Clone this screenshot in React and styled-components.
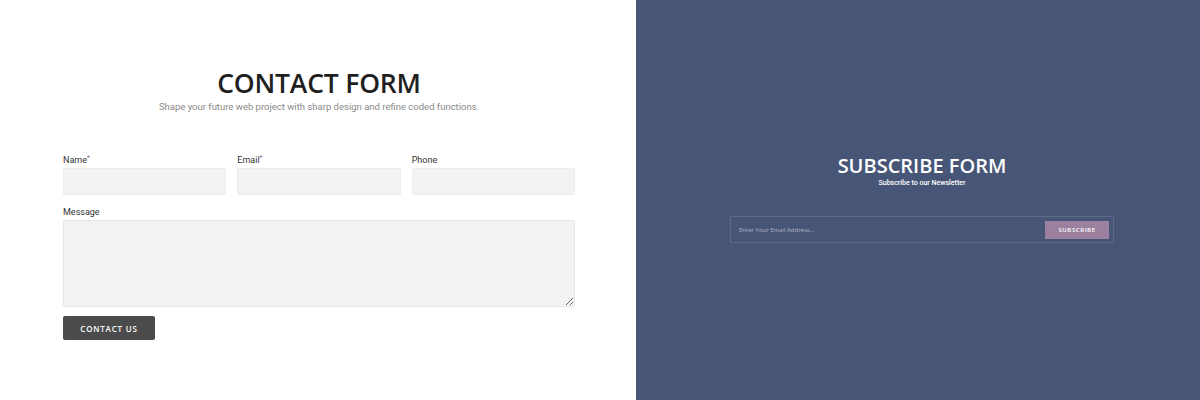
import React from "react";
import styled, { createGlobalStyle } from "styled-components";

const Global = createGlobalStyle`
  html, body { margin: 0; padding: 0; }
  body { font-family: "Open Sans", "Liberation Sans", sans-serif; }
  * { box-sizing: border-box; }
`;

const Page = styled.div`
  display: flex;
  width: 1200px;
  height: 400px;
  overflow: hidden;
`;

const LeftPanel = styled.section`
  width: 636px;
  background: #ffffff;
  padding: 69px 61px 0 63px;
`;

const RightPanel = styled.section`
  flex: 1;
  background: #475677;
  display: flex;
  flex-direction: column;
  align-items: center;
  padding-top: 155px;
  padding-left: 8px;
`;

const Header = styled.header`
  text-align: center;
  margin-bottom: 42px;
`;

const Title = styled.h1`
  margin: 0;
  font-family: "Open Sans", sans-serif;
  font-weight: 600;
  font-size: ${(p) => p.$size}px;
  line-height: 1.1;
  color: ${(p) => p.$color};
  letter-spacing: ${(p) => p.$spacing || 0}px;
`;

const Subtitle = styled.p`
  margin: 3px 0 0;
  font-family: Roboto, "Liberation Sans", sans-serif;
  font-size: 9.5px;
  line-height: 12px;
  color: #8a8a8a;
`;

const Form = styled.form`
  display: flex;
  flex-direction: column;
  width: 512px;
`;

const Row = styled.div`
  display: grid;
  grid-template-columns: repeat(3, 1fr);
  column-gap: 11px;
  margin-bottom: 12px;
`;

const Field = styled.div`
  display: flex;
  flex-direction: column;
`;

const Label = styled.label`
  font-family: Roboto, "Liberation Sans", sans-serif;
  font-size: 9px;
  line-height: 11px;
  color: #333;
  margin-bottom: 2px;
`;

const Req = styled.sup`
  color: #8a6b8c;
  font-size: 7px;
  vertical-align: top;
  position: relative;
  top: -2px;
`;

const Input = styled.input`
  height: 27px;
  width: 100%;
  border: 1px solid #ececec;
  border-radius: 2px;
  background: #f3f3f3;
  outline: none;
`;

const TextArea = styled.textarea`
  height: 87px;
  width: 100%;
  border: 1px solid #e6e6e6;
  border-radius: 2px;
  background: #f3f3f3;
  outline: none;
  resize: vertical;
  display: block;
`;

const Button = styled.button`
  margin-top: 9px;
  width: 92px;
  height: 24px;
  border: none;
  border-radius: 2px;
  background: #4b4b4b;
  color: #ffffff;
  font-family: "Open Sans", sans-serif;
  font-weight: 600;
  font-size: 8px;
  letter-spacing: 0.8px;
  text-transform: uppercase;
  padding: 0;
`;

const SubText = styled.p`
  margin: 2px 0 0;
  font-family: Roboto, "Liberation Sans", sans-serif;
  font-weight: 500;
  font-size: 7px;
  line-height: 9px;
  color: #ffffff;
`;

const SubscribeBox = styled.form`
  margin-top: 28px;
  width: 384px;
  height: 27px;
  border: 1px solid rgba(255, 255, 255, 0.12);
  display: flex;
  align-items: center;
  padding: 0 4px 0 6px;
`;

const EmailInput = styled.input`
  flex: 1;
  background: transparent;
  border: none;
  outline: none;
  font-family: "Open Sans", sans-serif;
  font-size: 6px;
  color: #fff;
  &::placeholder {
    color: rgba(255, 255, 255, 0.55);
  }
`;

const SubscribeButton = styled.button`
  width: 64px;
  height: 18px;
  border: none;
  background: #9b80a0;
  color: #ffffff;
  font-family: "Open Sans", sans-serif;
  font-weight: 600;
  font-size: 6px;
  letter-spacing: 0.6px;
  text-transform: uppercase;
  padding: 0;
`;

export default function App() {
  return (
    <Page>
      <Global />
      <LeftPanel>
        <Header>
          <Title $size={26.5} $color="#1f1f1f" $spacing={-0.2}>CONTACT FORM</Title>
          <Subtitle>Shape your future web project with sharp design and refine coded functions.</Subtitle>
        </Header>
        <Form onSubmit={(e) => e.preventDefault()}>
          <Row>
            <Field>
              <Label>Name<Req>*</Req></Label>
              <Input type="text" />
            </Field>
            <Field>
              <Label>Email<Req>*</Req></Label>
              <Input type="email" />
            </Field>
            <Field>
              <Label>Phone</Label>
              <Input type="tel" />
            </Field>
          </Row>
          <Field>
            <Label>Message</Label>
            <TextArea />
          </Field>
          <div>
            <Button type="submit">Contact Us</Button>
          </div>
        </Form>
      </LeftPanel>
      <RightPanel>
        <Title $size={20} $color="#ffffff">SUBSCRIBE FORM</Title>
        <SubText>Subscribe to our Newsletter</SubText>
        <SubscribeBox onSubmit={(e) => e.preventDefault()}>
          <EmailInput placeholder="Enter Your Email Address..." />
          <SubscribeButton type="submit">Subscribe</SubscribeButton>
        </SubscribeBox>
      </RightPanel>
    </Page>
  );
}
